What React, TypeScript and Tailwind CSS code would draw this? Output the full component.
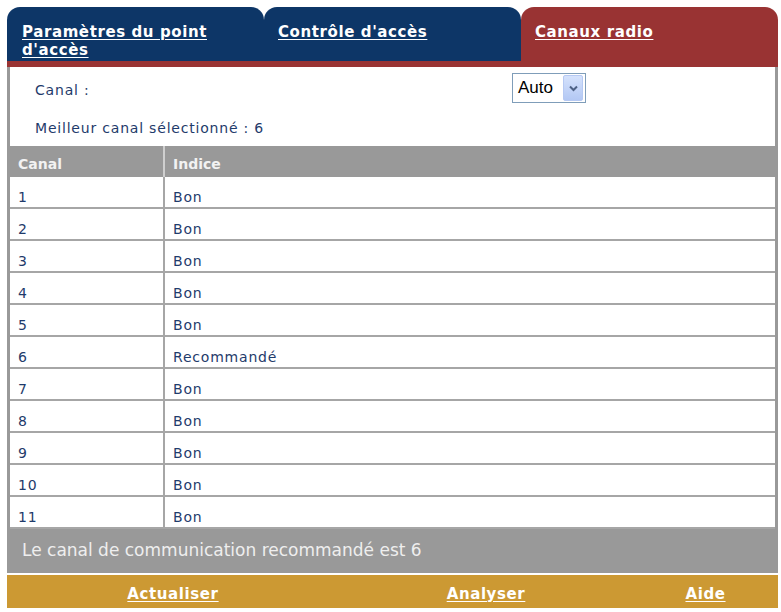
import React from 'react';

const channels: [string, string][] = [
  ['1', 'Bon'],
  ['2', 'Bon'],
  ['3', 'Bon'],
  ['4', 'Bon'],
  ['5', 'Bon'],
  ['6', 'Recommandé'],
  ['7', 'Bon'],
  ['8', 'Bon'],
  ['9', 'Bon'],
  ['10', 'Bon'],
  ['11', 'Bon'],
];

const tabLink =
  'block text-[15px] font-bold leading-[18px] tracking-[0.6px] text-white underline underline-offset-[2px]';

export default function App() {
  return (
    <div className="min-h-screen bg-white pt-[7px] pl-[7px] font-['DejaVu_Sans',Verdana,sans-serif]">
      <div className="w-[771px]">
        {/* Tabs */}
        <div className="grid h-[54px] grid-cols-3">
          <div className="rounded-t-[13px] bg-[#0d3667] pl-[15px] pt-[16px]">
            <a href="#" className={`w-[200px] ${tabLink}`}>
              Paramètres du point d'accès
            </a>
          </div>
          <div className="rounded-t-[13px] bg-[#0d3667] pl-[14px] pt-[16px]">
            <a href="#" className={tabLink}>
              Contrôle d'accès
            </a>
          </div>
          <div className="rounded-t-[13px] bg-[#993333] pl-[14px] pt-[16px]">
            <a href="#" className={tabLink}>
              Canaux radio
            </a>
          </div>
        </div>
        <div className="h-[6px] bg-[#993333]" />

        {/* Panel */}
        <div className="border-x-[3px] border-[#999999] pt-[6px] text-[14px] tracking-[0.8px] text-[#1f3b6b]">
          <div className="flex h-[30px] items-center">
            <div className="w-[502px] pl-[25px] pt-[4px]">Canal :</div>
            <div className="flex h-[30px] w-[74px] items-center justify-between border border-[#7f9db9] bg-white pl-[5px] pr-[2px] font-['Liberation_Sans',Arial,sans-serif] text-[17px] tracking-normal text-black">
              <span>Auto</span>
              <span className="flex h-[26px] w-[20px] items-center justify-center rounded-[2px] border border-[#b6c9f3] bg-gradient-to-b from-[#d5e2fc] to-[#b3c8f4]">
                <svg width="9" height="7" viewBox="0 0 9 7">
                  <path d="M1 1.5 L4.5 5 L8 1.5" fill="none" stroke="#4d6185" strokeWidth="2" />
                </svg>
              </span>
            </div>
          </div>
          <div className="h-[43px] pl-[25px] pt-[15px] leading-[20px]">Meilleur canal sélectionné : 6</div>

          {/* Table */}
          <div className="flex h-[31px] bg-[#999999] font-bold tracking-normal text-[#f2f2f2]">
            <div className="h-full w-[155px] border-r-2 border-[#cfcfcf] pl-[8px] pt-[8px]">Canal</div>
            <div className="pl-[8px] pt-[8px]">Indice</div>
          </div>
          {channels.map(([ch, idx]) => (
            <div key={ch} className="flex h-[32px] border-b-2 border-[#a6a6a6]">
              <div className="w-[155px] border-r-2 border-[#a6a6a6] pl-[8px] pt-[10px]">{ch}</div>
              <div className="pl-[8px] pt-[10px]">{idx}</div>
            </div>
          ))}
        </div>

        {/* Summary */}
        <div className="flex h-[44px] items-center bg-[#999999] pl-[15px] text-[17px] text-[#eeeeee]">
          Le canal de communication recommandé est 6
        </div>
        <div className="h-[2px]" />
        <div className="flex h-[33px] items-center bg-[#cc9933] pt-[5px] text-[15px] font-bold tracking-[0.6px] text-white">
          <div className="w-[332px] text-center">
            <a href="#" className="underline underline-offset-[2px]">Actualiser</a>
          </div>
          <div className="w-[294px] text-center">
            <a href="#" className="underline underline-offset-[2px]">Analyser</a>
          </div>
          <div className="w-[145px] text-center">
            <a href="#" className="underline underline-offset-[2px]">Aide</a>
          </div>
        </div>
      </div>
    </div>
  );
}
